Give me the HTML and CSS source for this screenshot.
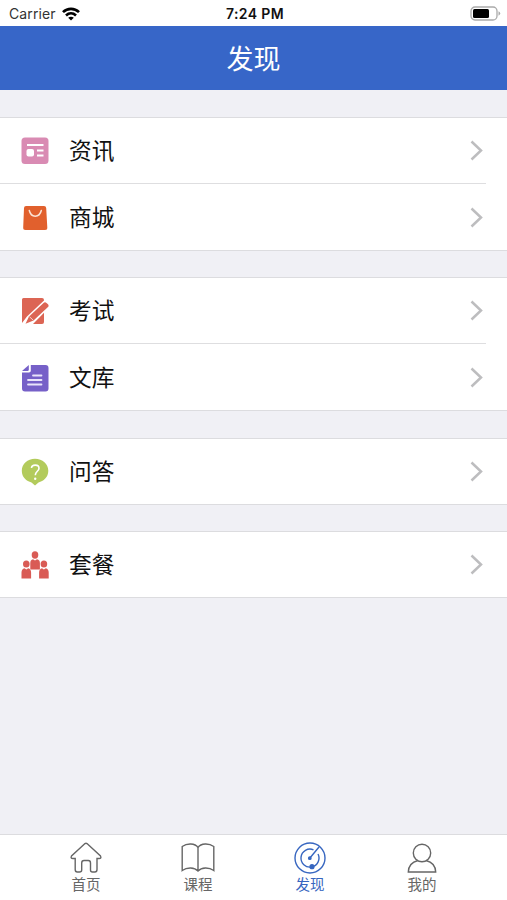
FILE: index.html
```html
<!DOCTYPE html>
<html lang="zh-CN">
<head>
    <meta charset="UTF-8">
    <meta name="viewport" content="width=device-width, initial-scale=1.0">
    <title>发现</title>
    <link rel="stylesheet" href="styles.css">
</head>
<body>
    <div class="status-bar">
        <div class="carrier">
            <span>Carrier</span>
            <svg width="18" height="14" viewBox="0 0 18 14" fill="none" stroke="#000" stroke-width="2.7">
                <path d="M1 5.1C5.5 .7 12.5 .7 17 5.1M4 8.4C7 5.7 11 5.7 14 8.4"/>
                <path d="M9 13.5L6.200 10.7C7.800 9.4 10.200 9.4 11.800 10.7Z" fill="#000" stroke="none"/>
            </svg>
        </div>
        <span class="time">7:24 PM</span>
        <svg class="battery" width="31" height="15" viewBox="0 0 31 15">
            <rect x="1" y="1" width="26" height="13" rx="4" fill="#fff" stroke="#aaa" stroke-width="1.3"/>
            <rect x="3" y="3" width="16" height="9" rx="1.5"/>
            <path d="M28.5 5.3Q32 7.5 28.500 9.7Z" fill="#aaa"/>
        </svg>
    </div>

    <header class="header">发现</header>

    <main class="content">
        <div class="group">
            <a class="row">
                <svg class="icon" viewBox="0 0 28 28">
                    <rect x=".5" y=".5" width="27" height="26.5" rx="3.5" fill="#d98bb3"/>
                    <path d="M6 8H22.5M16 13.5H22.5M16 18.5H22.5" stroke="#fff" stroke-width="2.2"/>
                    <rect x="5.5" y="12" width="7.5" height="7.5" rx="2" fill="#fff"/>
                </svg>
                <span class="label">资讯</span>
                <svg class="arrow" viewBox="0 0 13 21"><path d="M1.5 1.5L11 10.5L1.5 19.5"/></svg>
            </a>
            <a class="row">
                <svg class="icon" viewBox="0 0 28 28">
                    <path d="M5 2H23Q25 2 25.200 4L26.300 23.5Q26.500 26 24 26H4.500Q2 26 2.200 23.5L3 4Q3.100 2 5 2Z" fill="#e1602d"/>
                    <path d="M8.300 6.5C10 14 18.500 14 20.300 6.5" fill="none" stroke="#fbe3d4" stroke-width="1.5" stroke-linecap="round"/>
                </svg>
                <span class="label">商城</span>
                <svg class="arrow" viewBox="0 0 13 21"><path d="M1.5 1.5L11 10.5L1.5 19.5"/></svg>
            </a>
        </div>

        <div class="group">
            <a class="row">
                <svg class="icon" viewBox="0 0 28 28">
                    <path d="M2.500 1H21Q23 1 23 3V3.500L6 19.500L1 26V2.500Q1 1 2.500 1Z" fill="#dc6554"/>
                    <path d="M23 15.800V25Q23 27 21 27H12Z" fill="#dc6554"/>
                    <path d="M22.500 6Q24 4.700 25.500 6L27 7.300Q28.200 8.600 27 10L12.500 23.500L4.500 26.800L8 19.500Z" fill="#dc6554"/>
                    <path d="M8.500 19.800L12.300 23.200" stroke="#f6cfc8" stroke-width="1"/>
                </svg>
                <span class="label">考试</span>
                <svg class="arrow" viewBox="0 0 13 21"><path d="M1.5 1.5L11 10.5L1.5 19.5"/></svg>
            </a>
            <a class="row">
                <svg class="icon" viewBox="0 0 28 28">
                    <path d="M9.800 1H24.500Q27.500 1 27.500 4V24.500Q27.500 27.500 24.500 27.500H4Q1 27.500 1 24.500V8.500H8Q9.800 8.500 9.800 6.800Z" fill="#7660c8"/>
                    <path d="M1 7L7.800 1V5.500Q7.800 7 6.500 7Z" fill="#7660c8"/>
                    <path d="M12 11.500H20.500M7 16H20.500M7 20.500H20.500" stroke="#e9e4fa" stroke-width="1.8" stroke-linecap="round"/>
                </svg>
                <span class="label">文库</span>
                <svg class="arrow" viewBox="0 0 13 21"><path d="M1.5 1.5L11 10.5L1.5 19.5"/></svg>
            </a>
        </div>

        <div class="group">
            <a class="row">
                <svg class="icon" viewBox="0 0 28 28">
                    <path d="M14 .8C21.500 .8 27.300 6 27.300 12.800C27.300 19.300 22.500 23.300 17.500 24.500L14 27.500L10.500 24.500C5.500 23.300 .8 19.300 .8 12.800C.8 6 6.500 .8 14 .8Z" fill="#b3cb5c"/>
                    <path d="M10.500 10C10.700 6.100 18 6.100 18 10.200C18 13.400 14.300 13.200 14.300 17.300" fill="none" stroke="#fff" stroke-width="1.6"/>
                    <circle cx="14.2" cy="20.7" r="1.200" fill="#fff"/>
                </svg>
                <span class="label">问答</span>
                <svg class="arrow" viewBox="0 0 13 21"><path d="M1.5 1.5L11 10.5L1.5 19.5"/></svg>
            </a>
        </div>

        <div class="group">
            <a class="row">
                <svg class="icon" viewBox="0 0 28 28" fill="#d95b55">
                    <ellipse cx="14" cy="4" rx="3.3" ry="3.7"/>
                    <ellipse cx="5.3" cy="13" rx="3.3" ry="3.6"/>
                    <ellipse cx="22.9" cy="13" rx="3.3" ry="3.6"/>
                    <path d="M9.300 18.5V12Q9.300 9 12 8.300L14 9.500L16 8.300Q18.900 9 18.900 12V18.500Z"/>
                    <path d="M.5 27.500V21.500Q.5 18 3.500 17.200L5.300 18.500L7.200 17.200Q10.100 18 10.100 21.500V27.500ZM18.100 27.500V21.500Q18.100 18 21 17.200L22.900 18.500L24.800 17.200Q27.700 18 27.700 21.500V27.500Z"/>
                </svg>
                <span class="label">套餐</span>
                <svg class="arrow" viewBox="0 0 13 21"><path d="M1.5 1.5L11 10.5L1.5 19.5"/></svg>
            </a>
        </div>
    </main>

    <nav class="tab-bar">
        <a class="tab">
            <svg class="tab-icon" viewBox="0 0 34 34">
                <path d="M16 2.600Q17 1.800 18 2.600L31.500 15Q32.800 17.500 30 17.500H28V28.500Q28 31 25.800 31H23.500Q21.500 31 21.500 29V22Q21.500 19.500 19.300 19.500H15Q12.700 19.500 12.700 22V29Q12.700 31 10.500 31H8.300Q6.200 31 6.200 28.500V17.500H4Q1.200 17.500 2.500 15Z"/>
            </svg>
            <span>首页</span>
        </a>
        <a class="tab">
            <svg class="tab-icon" viewBox="0 0 34 34">
                <path d="M17 6.500C14 2 6 2 1.200 5.500V29.500C6 26 13.500 26 17 30C20.500 26 28 26 32.800 29.500V5.500C28 2 20 2 17 6.500ZM17 6.500V30"/>
            </svg>
            <span>课程</span>
        </a>
        <a class="tab active">
            <svg class="tab-icon" viewBox="0 0 34 34">
                <circle cx="17" cy="17" r="15"/>
                <path d="M20.5 8.8A9 9 0 1 0 25 13M16.5 17.5L26 6"/>
                <circle cx="16.8" cy="17.2" r="1.2" fill="currentColor"/>
                <circle cx="19" cy="25.7" r="1.9" fill="currentColor"/>
            </svg>
            <span>发现</span>
        </a>
        <a class="tab">
            <svg class="tab-icon" viewBox="0 0 34 34">
                <path d="M13 19.5C7 21 3.500 25 3.300 31H30.700C30.500 25 27 21 21 19.5"/>
                <circle cx="17" cy="12" r="8.7"/>
            </svg>
            <span>我的</span>
        </a>
    </nav>
</body>
</html>
```
FILE: styles.css
```css
* {
    box-sizing: border-box;
}
body {
    margin: 0;
    height: 100vh;
    display: flex;
    flex-direction: column;
    overflow: hidden;
    background: #f0f0f5;
    color: #111;
    font-family: "Inter", "Noto Sans CJK SC", sans-serif;
}
.status-bar {
    display: grid;
    grid-template-columns: 1fr auto 1fr;
    align-items: center;
    height: 26px;
    padding: 1px 6px 0 9px;
    background: #fff;
    font-size: 14px;
}
.carrier {
    display: flex;
    align-items: center;
    gap: 6px;
    color: #333;
    letter-spacing: 0.1px;
}
.time {
    font-weight: 600;
    letter-spacing: 0.4px;
}
.battery {
    justify-self: end;
}
.header {
    height: 64px;
    padding-bottom: 1px;
    display: flex;
    align-items: center;
    justify-content: center;
    background: #3766c8;
    color: #fff;
    font-size: 27px;
}
.content {
    flex: 1;
    padding-top: 27px;
}
.group {
    margin-bottom: 26px;
    background: #fff;
    border-top: 1px solid #dcdcdf;
    border-bottom: 1px solid #dcdcdf;
}
.group:nth-child(2) {
    margin-bottom: 27px;
}
.row {
    display: flex;
    align-items: center;
    height: 65px;
    padding: 0 24px 0 21px;
}
.row + .row {
    height: 67px;
    padding-top: 2px;
    /* separator stops short of the right edge */
    background: linear-gradient(#dedee0, #dedee0) no-repeat 0 0 / 486px 1px;
}
.icon {
    width: 28px;
    height: 28px;
    margin-right: 20px;
}
.label {
    flex: 1;
    font-size: 22.7px;
    line-height: 33px;
}
.arrow {
    width: 13px;
    height: 21px;
    fill: none;
    stroke: #bdbdbf;
    stroke-width: 2.5;
}
.tab-bar {
    display: flex;
    justify-content: space-between;
    height: 66px;
    padding: 6px 29px 0 30px;
    background: #fff;
    border-top: 1px solid #dcdcdf;
}
.tab {
    display: flex;
    flex-direction: column;
    align-items: center;
    width: 112px;
    color: #666;
    font-size: 14.5px;
    line-height: 20px;
}
.tab-icon {
    width: 34px;
    height: 34px;
    fill: none;
    stroke: currentColor;
    stroke-width: 1.4;
}
.active {
    color: #3766c0;
}
```
